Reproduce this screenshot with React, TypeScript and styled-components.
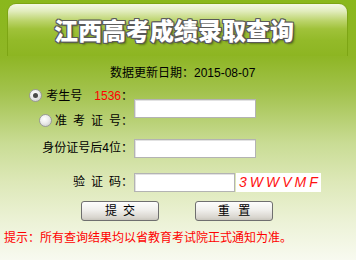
import React from "react";
import styled, { createGlobalStyle } from "styled-components";

const Global = createGlobalStyle`
  html, body { margin: 0; padding: 0; }
  body { width: 356px; height: 260px; overflow: hidden; }
`;

const cjk = `"Liberation Sans", "Noto Sans CJK SC", sans-serif`;

const Page = styled.div`
  width: 356px;
  height: 260px;
  font-family: ${cjk};
  font-size: 12px;
  color: #000;
  background: linear-gradient(
    to bottom,
    #8ab81c 0%,
    #8fb626 22%,
    #a2c24c 35%,
    #c9dc94 55%,
    #dde8b8 70%,
    #ecf2d6 85%,
    #f8faf0 100%
  );
`;

const Banner = styled.div`
  height: 56px;
  padding: 3px 8px 0 7px;
  box-sizing: border-box;
`;

const BannerInner = styled.div`
  height: 100%;
  box-sizing: border-box;
  border: 1px solid #7da514;
  border-bottom: none;
  border-radius: 9px 9px 0 0;
  background: linear-gradient(
    to bottom,
    #f4f8e6 0%,
    #e1ecbc 14%,
    #bcd46c 32%,
    #a0c23a 48%,
    #93ba29 70%,
    #8db522 100%
  );
  display: flex;
  align-items: center;
  justify-content: center;
  padding-right: 7px;
`;

const Title = styled.h1`
  margin: 0;
  font-family: "Noto Sans CJK SC", sans-serif;
  font-weight: 900;
  font-size: 24px;
  line-height: 28px;
  color: #ffffff;
  text-shadow: -1px -1px 0 #5a5a5a, 1px -1px 0 #5a5a5a, -1px 1px 0 #5a5a5a,
    1px 1px 0 #5a5a5a, 0 1px 0 #5a5a5a, 0 -1px 0 #5a5a5a, 1px 0 0 #5a5a5a,
    -1px 0 0 #5a5a5a, 2px 2px 2px rgba(0, 0, 0, 0.35);
`;

const DateLine = styled.div`
  margin-top: 7px;
  height: 20px;
  line-height: 20px;
  padding-left: 110px;
`;

const FormGrid = styled.div`
  display: grid;
  grid-template-columns: 133px 1fr;
  grid-template-rows: 25px 25px 30px 38px;
  column-gap: 1px;
  align-items: center;
`;

const Label = styled.div<{ $row: number }>`
  grid-column: 1;
  grid-row: ${(p) => p.$row};
  display: flex;
  align-items: center;
  justify-content: flex-end;
  white-space: pre;
  line-height: 14px;
`;

const Radio = styled.span<{ $checked?: boolean; $gap: number }>`
  width: 11px;
  height: 11px;
  border-radius: 50%;
  border: 1px solid #9a9a9a;
  margin-right: ${(p) => p.$gap}px;
  background: radial-gradient(circle at 40% 35%, #ffffff 0%, #ececec 45%, #c4c4c4 100%);
  display: inline-flex;
  align-items: center;
  justify-content: center;
  &::after {
    content: "";
    display: ${(p) => (p.$checked ? "block" : "none")};
    width: 5px;
    height: 5px;
    border-radius: 50%;
    background: #4a4a4a;
  }
`;

const Red = styled.span<{ $gap?: number }>`
  color: #ff0000;
  font-size: 12px;
  margin-left: ${(p) => p.$gap ?? 0}px;
`;

const Field = styled.div<{ $row: string }>`
  grid-column: 2;
  grid-row: ${(p) => p.$row};
  display: flex;
  align-items: center;
`;

const TextInput = styled.input<{ $w: number }>`
  width: ${(p) => p.$w}px;
  height: 19px;
  box-sizing: border-box;
  margin: 0;
  padding: 0 2px;
  border: 1px solid #b3b3b3;
  box-shadow: inset 1px 1px 0 #e2e2e2;
  background: #fff;
  outline: none;
`;

const Captcha = styled.div`
  width: 85px;
  height: 19px;
  margin-left: 1px;
  background: #fff;
  color: #ff1010;
  font-family: "Liberation Sans", sans-serif;
  font-style: italic;
  font-size: 14px;
  line-height: 19px;
  letter-spacing: 3px;
  padding-left: 3px;
  box-sizing: border-box;
  white-space: nowrap;
`;

const Buttons = styled.div`
  display: flex;
  gap: 36px;
  padding-left: 81px;
`;

const Button = styled.button`
  width: 78px;
  height: 20px;
  box-sizing: border-box;
  margin: 0;
  padding: 0;
  border: 1px solid #6f6f6f;
  border-radius: 3px;
  background: linear-gradient(to bottom, #fdfdfd 0%, #f0efec 45%, #d9d6cf 85%, #c9c6be 100%);
  font-family: ${cjk};
  font-size: 12px;
  line-height: 18px;
  color: #000;
  white-space: pre;
`;

const Hint = styled.div`
  margin-top: 9px;
  padding-left: 4px;
  line-height: 16px;
  color: #ff0000;
`;

export default function App() {
  return (
    <>
      <Global />
      <Page>
        <Banner>
          <BannerInner>
            <Title>江西高考成绩录取查询</Title>
          </BannerInner>
        </Banner>
        <DateLine>数据更新日期：2015-08-07</DateLine>
        <FormGrid>
          <Label $row={1}>
            <Radio $checked $gap={4} />
            考生号<Red $gap={12}>1536</Red>：
          </Label>
          <Label $row={2}>
            <Radio $gap={3} />
            {"准\u2002考\u2002证\u2002号："}
          </Label>
          <Field $row="1 / span 2">
            <TextInput $w={122} />
          </Field>
          <Label $row={3}>身份证号后4位：</Label>
          <Field $row="3">
            <TextInput $w={122} />
          </Field>
          <Label $row={4}>{"验\u2002证\u2002码："}</Label>
          <Field $row="4">
            <TextInput $w={101} />
            <Captcha>3WWVMF</Captcha>
          </Field>
        </FormGrid>
        <Buttons>
          <Button>{"提\u2002交"}</Button>
          <Button>{"重\u2002\u2009置"}</Button>
        </Buttons>
        <Hint>提示：所有查询结果均以省教育考试院正式通知为准。</Hint>
      </Page>
    </>
  );
}
